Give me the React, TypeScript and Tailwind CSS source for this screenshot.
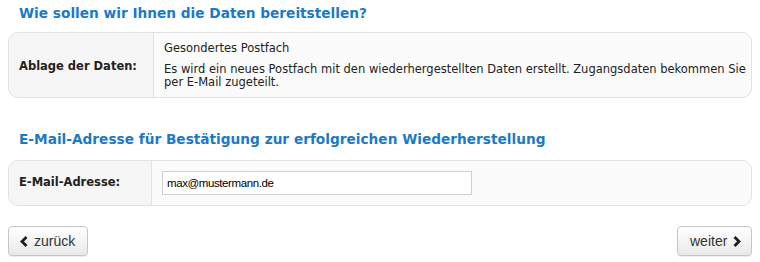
const verdana = "font-['Verdana','DejaVu_Sans',sans-serif]";
const arial = "font-['Liberation_Sans',Arial,sans-serif]";

function Chevron({ dir }: { dir: "left" | "right" }) {
  return (
    <svg width="8" height="11" viewBox="0 0 8 11" className="shrink-0">
      <polyline
        points={dir === "left" ? "6.5,1 2,5.5 6.5,10" : "1.5,1 6,5.5 1.5,10"}
        fill="none"
        stroke="#1e1e1e"
        strokeWidth="2.8"
        strokeLinejoin="miter"
      />
    </svg>
  );
}

export default function App() {
  return (
    <div className={`w-[760px] h-[262px] bg-white px-2 pt-[3px] text-[#222] ${verdana}`}>
      <h2 className="pl-[11px] text-[13.7px] leading-[20px] font-bold text-[#1a7ac6]">
        Wie sollen wir Ihnen die Daten bereitstellen?
      </h2>
      <div className="mt-[9px] flex h-[66px] rounded-[10px] border border-[#e2e2e2] bg-[#fbfbfb] overflow-hidden">
        <div className="w-[145px] shrink-0 flex items-center pl-[10px] pt-[3px] bg-[#f6f6f6] border-r border-[#e2e2e2] text-[11.5px] font-bold">
          Ablage der Daten:
        </div>
        <div className="pl-[10px] pt-[9px] text-[11.5px] leading-[13px]">
          <p>Gesondertes Postfach</p>
          <p className="mt-[8px]">
            Es wird ein neues Postfach mit den wiederhergestellten Daten erstellt. Zugangsdaten bekommen Sie per E-Mail zugeteilt.
          </p>
        </div>
      </div>

      <h2 className="mt-[31px] pl-[11px] text-[13.7px] leading-[20px] font-bold text-[#1a7ac6]">
        E-Mail-Adresse für Bestätigung zur erfolgreichen Wiederherstellung
      </h2>
      <div className="mt-[11px] flex h-[46px] rounded-[10px] border border-[#e2e2e2] bg-[#fbfbfb] overflow-hidden">
        <div className="w-[143px] shrink-0 flex items-center pl-[10px] bg-[#f6f6f6] border-r border-[#e2e2e2] text-[11.5px] font-bold">
          E-Mail-Adresse:
        </div>
        <div className="flex items-center pl-[10px]">
          <input
            defaultValue="max@mustermann.de"
            className={`w-[310px] h-[24px] border border-[#cfcfcf] bg-white px-[4px] text-[11.5px] tracking-[-0.4px] text-black outline-none ${arial}`}
          />
        </div>
      </div>

      <div className={`mt-[20px] flex justify-between ${arial}`}>
        <button className="flex items-center gap-[6px] h-[30px] w-[80px] pl-[11px] rounded-[4px] border border-[#c6c6c6] bg-gradient-to-b from-white to-[#e9e9e9] text-[14px] text-[#333] shadow-[0_1px_1px_rgba(0,0,0,0.08)]">
          <Chevron dir="left" />
          zurück
        </button>
        <button className="flex items-center gap-[6px] h-[30px] w-[75px] pl-[12px] rounded-[4px] border border-[#c6c6c6] bg-gradient-to-b from-white to-[#e9e9e9] text-[14px] text-[#333] shadow-[0_1px_1px_rgba(0,0,0,0.08)]">
          weiter
          <Chevron dir="right" />
        </button>
      </div>
    </div>
  );
}
